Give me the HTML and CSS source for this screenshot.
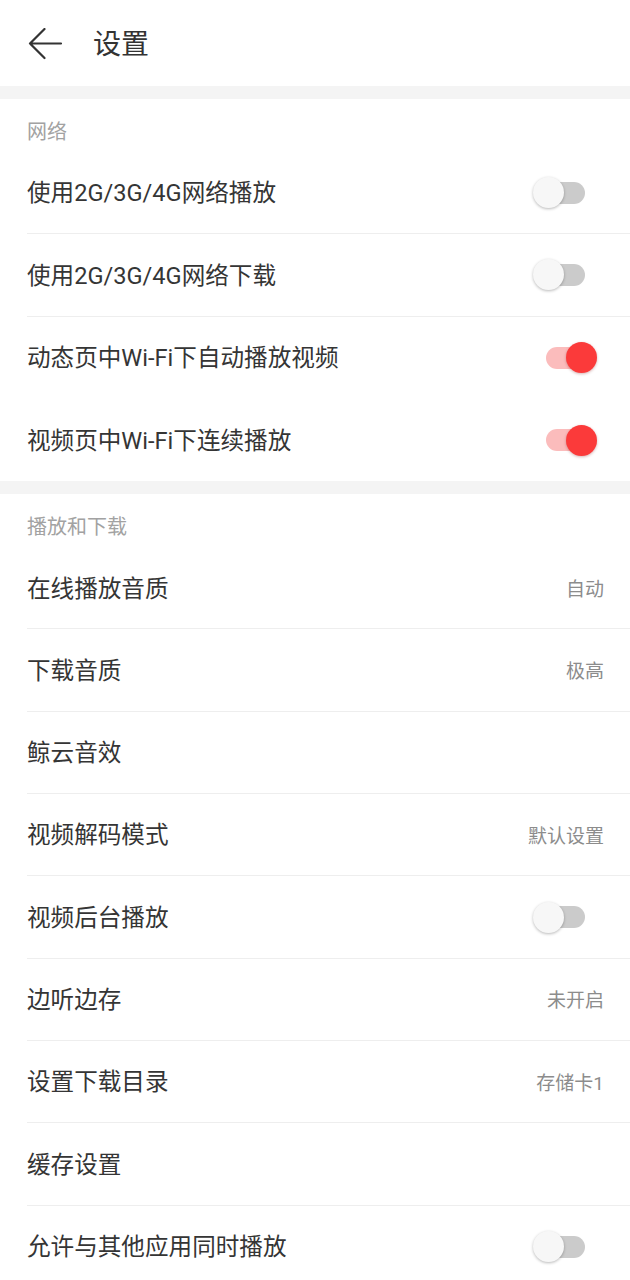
FILE: index.html
```html
<!DOCTYPE html>
<html lang="zh-CN">
<head>
<meta charset="utf-8">
<title>设置</title>
<link rel="stylesheet" href="styles.css">
</head>
<body>
<div class="page">
  <header class="topbar">
    <svg class="back" width="36" height="32" viewBox="0 0 36 32" aria-hidden="true">
      <path d="M33 15.5 H2 M16.5 1 L2 15.5 L16.5 30" fill="none" stroke="#333" stroke-width="2.2" stroke-linecap="round" stroke-linejoin="round"/>
    </svg>
    <h1 class="title">设置</h1>
  </header>

  <div class="band"></div>

  <section class="group">
    <div class="group-title">网络</div>
    <div class="row line"><span class="label">使用2G/3G/4G网络播放</span><span class="switch"><span class="track"></span><span class="thumb"></span></span></div>
    <div class="row line"><span class="label">使用2G/3G/4G网络下载</span><span class="switch"><span class="track"></span><span class="thumb"></span></span></div>
    <div class="row"><span class="label">动态页中Wi-Fi下自动播放视频</span><span class="switch on"><span class="track"></span><span class="thumb"></span></span></div>
    <div class="row"><span class="label">视频页中Wi-Fi下连续播放</span><span class="switch on"><span class="track"></span><span class="thumb"></span></span></div>
  </section>

  <div class="band"></div>

  <section class="group">
    <div class="group-title">播放和下载</div>
    <div class="row line"><span class="label">在线播放音质</span><span class="value">自动</span></div>
    <div class="row line"><span class="label">下载音质</span><span class="value">极高</span></div>
    <div class="row line"><span class="label">鲸云音效</span></div>
    <div class="row line"><span class="label">视频解码模式</span><span class="value">默认设置</span></div>
    <div class="row line"><span class="label">视频后台播放</span><span class="switch"><span class="track"></span><span class="thumb"></span></span></div>
    <div class="row line"><span class="label">边听边存</span><span class="value">未开启</span></div>
    <div class="row line"><span class="label">设置下载目录</span><span class="value">存储卡1</span></div>
    <div class="row line"><span class="label">缓存设置</span></div>
    <div class="row line"><span class="label">允许与其他应用同时播放</span><span class="switch"><span class="track"></span><span class="thumb"></span></span></div>
  </section>
</div>
</body>
</html>
```

FILE: styles.css
```css
* { box-sizing: border-box; }
html, body { margin: 0; padding: 0; background: #fff; }
body {
  font-family: Roboto, "Noto Sans CJK SC", "Noto Sans", sans-serif;
  color: #333;
  overflow: hidden;
}
.page { width: 630px; height: 1280px; overflow: hidden; }

.topbar {
  height: 86px;
  display: flex;
  align-items: center;
  padding-left: 28px;
  padding-top: 2px;
}
.back { display: block; }
.title {
  margin: 0 0 0 29px;
  font-size: 28px;
  font-weight: 400;
  line-height: 1;
  color: #333;
  padding-top: 2px;
}

.band { height: 13px; background: #f4f4f4; }

.group { padding-left: 27px; }
.group-title {
  height: 53px;
  padding-top: 23px;
  font-size: 20px;
  line-height: 20px;
  color: #a2a2a2;
}

.row {
  height: 82.3px;
  display: flex;
  align-items: center;
  justify-content: space-between;
}
.row.line { border-bottom: 1px solid #eeeeee; }
.group .row:last-child { border-bottom: none; }

.label {
  font-size: 23.6px;
  line-height: 1;
  color: #353535;
  padding-top: 3px;
}
.value {
  font-size: 19px;
  line-height: 1;
  color: #8c8c8c;
  margin-right: 26px;
  padding-top: 3px;
}

.switch {
  position: relative;
  width: 66px;
  height: 33px;
  margin-right: 32px;
  flex: none;
}
.track {
  position: absolute;
  left: 14px;
  top: 5.5px;
  width: 39px;
  height: 22px;
  border-radius: 11px;
  background: #cbcbcb;
}
.thumb {
  position: absolute;
  left: 1px;
  top: 1px;
  width: 31px;
  height: 31px;
  border-radius: 50%;
  background: #f7f7f7;
  box-shadow: 0 1px 3px rgba(0, 0, 0, 0.28);
}
.switch.on .track { background: #fbbcbc; }
.switch.on .thumb {
  left: 34px;
  background: #fb3a3a;
  box-shadow: 0 1px 3px rgba(120, 0, 0, 0.3);
}
```
